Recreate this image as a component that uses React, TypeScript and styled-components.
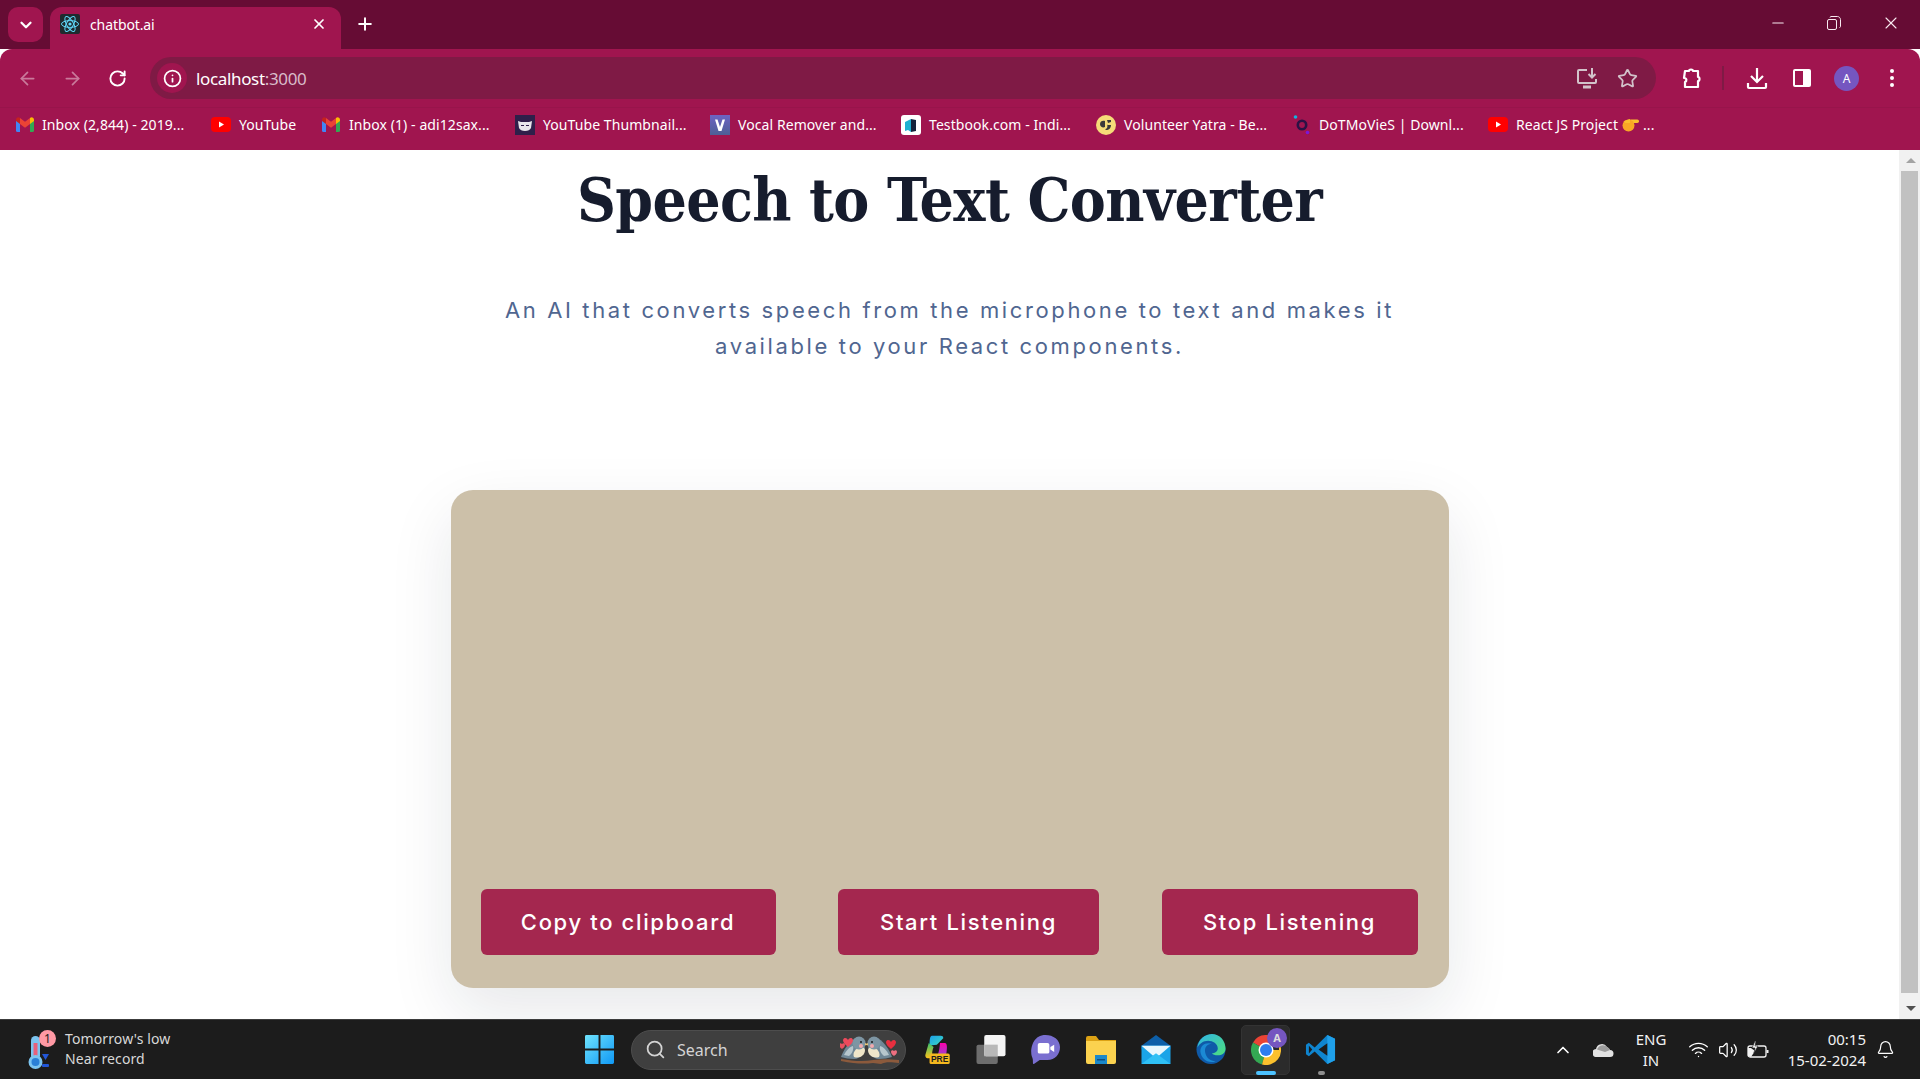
import { FC, ReactNode } from "react";
import styled, { createGlobalStyle } from "styled-components";
import {
  ArrowLeft,
  ArrowRight,
  ChevronDown,
  ChevronUp,
  Info,
  Minus,
  Plus,
  RotateCw,
  Search,
  Star,
  Volume2,
  Wifi,
  X,
  Bell,
} from "lucide-react";

const GlobalStyle = createGlobalStyle`
  html, body {
    margin: 0;
    padding: 0;
    height: 100%;
    overflow: hidden;
    background: #fff;
  }
  * {
    box-sizing: border-box;
  }
`;

const UI_FONT = `"Noto Sans", "Open Sans", sans-serif`;

const Screen = styled.div`
  width: 1920px;
  height: 1079px;
  display: flex;
  flex-direction: column;
  overflow: hidden;
  font-family: ${UI_FONT};
`;

/* browser chrome */

const TabStrip = styled.div`
  height: 49px;
  background: #660c34;
  display: flex;
  align-items: flex-end;
  padding-left: 8px;
  color: #fff;
`;

const TabSearch = styled.div`
  width: 35px;
  height: 35px;
  margin-bottom: 7px;
  border-radius: 10px;
  background: #a0154f;
  display: flex;
  align-items: center;
  justify-content: center;
`;

const Tab = styled.div`
  width: 291px;
  height: 42px;
  margin-left: 7px;
  padding: 0 14px 8px 10px;
  border-radius: 12px 12px 0 0;
  background: #a0154f;
  display: flex;
  align-items: center;
  gap: 10px;
`;

const TabTitle = styled.span`
  flex: 1;
  font-size: 14px;
  letter-spacing: -0.1px;
`;

const NewTab = styled.div`
  width: 30px;
  height: 30px;
  margin: 0 0 10px 9px;
  display: flex;
  align-items: center;
  justify-content: center;
`;

const WindowControls = styled.div`
  margin-left: auto;
  height: 49px;
  padding-bottom: 3px;
  display: flex;
  align-items: center;
`;

const WindowButton = styled.div<{ $w: number }>`
  width: ${(p) => p.$w}px;
  display: flex;
  justify-content: center;
  color: #f8eaf0;
`;

const Toolbar = styled.div`
  height: 58px;
  background: #a0154f;
  border-radius: 12px 12px 0 0;
  padding: 8px 4px 8px 5px;
  display: flex;
  align-items: center;
`;

const ToolButton = styled.div<{ $dim?: boolean }>`
  width: 45px;
  height: 42px;
  display: flex;
  align-items: center;
  justify-content: center;
  color: ${(p) => (p.$dim ? "#c97a9b" : "#fff")};
`;

const Omnibox = styled.div`
  width: 1506px;
  height: 42px;
  margin: 0 12px 0 10px;
  padding: 0 9px 0 7px;
  border-radius: 21px;
  background: #7f1a45;
  display: flex;
  align-items: center;
`;

const SiteInfo = styled.div`
  width: 30px;
  height: 30px;
  border-radius: 50%;
  background: #a0154f;
  color: #fff;
  display: flex;
  align-items: center;
  justify-content: center;
`;

const Url = styled.span`
  flex: 1;
  margin-left: 9px;
  font-size: 17px;
  letter-spacing: -0.35px;
  color: #fff;
`;

const UrlPort = styled.span`
  color: #d9bcc9;
`;

const OmniAction = styled.div`
  width: 40px;
  height: 30px;
  display: flex;
  align-items: center;
  justify-content: center;
  color: #d2c3ca;
`;

const ToolDivider = styled.div`
  width: 2px;
  height: 24px;
  margin: 0 10px 0 9px;
  background: #7f1a45;
`;

const Avatar = styled.div`
  width: 25px;
  height: 25px;
  border-radius: 50%;
  background: #7556c0;
  color: #fff;
  font-size: 12px;
  display: flex;
  align-items: center;
  justify-content: center;
`;

const BookmarkBar = styled.div`
  height: 43px;
  background: #a0154f;
  padding: 0 0 9px 16px;
  display: flex;
  align-items: center;
  border-top: 1px solid #98144b;
`;

const Bookmark = styled.div<{ $w: number; $gap: number }>`
  width: ${(p) => p.$w}px;
  flex: none;
  display: flex;
  align-items: center;
  gap: ${(p) => p.$gap}px;
  color: #fff;
  font-size: 14px;
  letter-spacing: 0.08px;
  white-space: nowrap;
`;

const BookmarkLabel = styled.span`
  display: inline-flex;
  align-items: center;
  gap: 4px;
`;

/* page */

const Viewport = styled.div`
  flex: 1;
  min-height: 0;
  display: flex;
  background: #fff;
`;

const Main = styled.main`
  flex: 1;
  min-width: 0;
  display: flex;
  flex-direction: column;
  align-items: center;
  overflow: hidden;
`;

const Heading = styled.h1`
  margin: 14px 0 0;
  font-family: "DejaVu Serif Condensed", "DejaVu Serif", "Liberation Serif", serif;
  font-size: 60px;
  line-height: 72px;
  font-weight: 700;
  letter-spacing: -0.6px;
  color: #161c2d;
`;

const Lead = styled.p`
  width: 900px;
  margin: 56px 0 0;
  font-family: "Inter", "Liberation Sans", sans-serif;
  font-size: 22px;
  font-weight: 400;
  line-height: 36px;
  letter-spacing: 2.62px;
  text-align: center;
  color: #506690;
`;

const Card = styled.section`
  width: 998px;
  height: 498px;
  margin-top: 126px;
  padding: 0 31px 33px 30px;
  border-radius: 22px;
  background: #ccc0a9;
  box-shadow: 0 24px 64px rgba(22, 28, 45, 0.1);
  display: flex;
  align-items: flex-end;
  justify-content: space-between;
`;

const ActionButton = styled.button<{ $w: number }>`
  width: ${(p) => p.$w}px;
  height: 66px;
  padding: 0;
  border: none;
  border-radius: 6px;
  background: #a4274f;
  color: #fff;
  font-family: "Inter", "Liberation Sans", sans-serif;
  font-size: 22px;
  font-weight: 500;
  letter-spacing: 1.65px;
`;

const Scrollbar = styled.div`
  width: 21px;
  padding-left: 2px;
  background: #f1f1f1;
  display: flex;
  flex-direction: column;
  align-items: stretch;
`;

const ScrollArrow = styled.div<{ $down?: boolean }>`
  height: 21px;
  display: flex;
  align-items: center;
  justify-content: center;
  &::before {
    content: "";
    border-left: 5px solid transparent;
    border-right: 5px solid transparent;
    ${(p) => (p.$down ? "border-top: 5px solid #505050;" : "border-bottom: 5px solid #a3a3a3;")}
  }
`;

const ScrollThumb = styled.div`
  height: 822px;
  margin-right: 2px;
  background: #c1c1c1;
`;

const ScrollGap = styled.div`
  flex: 1;
`;

/* taskbar */

const Taskbar = styled.footer`
  height: 60px;
  flex: none;
  border-top: 1px solid #3c3c3c;
  background: #1c1c1c;
  display: flex;
  align-items: center;
  color: #fff;
`;

const Weather = styled.div`
  width: 572px;
  padding-left: 28px;
  display: flex;
  align-items: center;
  gap: 14px;
`;

const WeatherIcon = styled.div`
  position: relative;
  width: 23px;
  height: 42px;
  display: flex;
  align-items: flex-end;
`;

const WeatherBadge = styled.span`
  position: absolute;
  top: 1px;
  left: 11px;
  width: 17px;
  height: 17px;
  border-radius: 50%;
  background: #ff99a4;
  color: #1c1c1c;
  font-size: 12px;
  line-height: 17px;
  text-align: center;
`;

const WeatherText = styled.div`
  margin-top: -2px;
  font-size: 14px;
  line-height: 20px;
  letter-spacing: 0.12px;
  color: #d8d8d8;
`;

const TaskIcon = styled.div<{ $active?: boolean }>`
  position: relative;
  width: 55px;
  height: 50px;
  flex: none;
  display: flex;
  align-items: center;
  justify-content: center;
  &::before {
    content: "";
    display: ${(p) => (p.$active ? "block" : "none")};
    position: absolute;
    inset: 0 3px;
    border-radius: 5px;
    background: #2b2b2b;
    border: 1px solid #333;
  }
  & > svg {
    position: relative;
  }
`;

const RunningMark = styled.span<{ $active?: boolean }>`
  position: absolute;
  bottom: 0;
  left: 50%;
  width: ${(p) => (p.$active ? 20 : 7)}px;
  height: 4px;
  margin-left: ${(p) => (p.$active ? -10 : -3)}px;
  border-radius: 2px;
  background: ${(p) => (p.$active ? "#4cc2ff" : "#8f8f8f")};
`;

const ChromeBadge = styled.span`
  position: absolute;
  top: 3px;
  right: 6px;
  width: 20px;
  height: 20px;
  border-radius: 50%;
  background: #7556c0;
  color: #ddd;
  font-size: 11px;
  font-weight: 700;
  line-height: 20px;
  text-align: center;
`;

const SearchPill = styled.div`
  width: 275px;
  height: 40px;
  margin: 0 2px 0 4px;
  padding: 0 5px 0 13px;
  border-radius: 20px;
  border: 1px solid #4d4d4d;
  background: #3f3f3f;
  display: flex;
  align-items: center;
  color: #d4d4d4;
`;

const SearchText = styled.span`
  flex: 1;
  margin-left: 11px;
  font-size: 16px;
`;

const Tray = styled.div`
  margin-left: auto;
  padding-right: 16px;
  display: flex;
  align-items: center;
`;

const TrayItem = styled.div<{ $w: number; $end?: boolean }>`
  width: ${(p) => p.$w}px;
  flex: none;
  display: flex;
  align-items: center;
  justify-content: ${(p) => (p.$end ? "flex-end" : "center")};
`;

const TrayText = styled.div<{ $right?: boolean }>`
  font-size: 15px;
  line-height: 21px;
  text-align: ${(p) => (p.$right ? "right" : "center")};
  color: #f2f2f2;
`;

/* small drawings */

const ReactMark: FC = () => (
  <svg width="20" height="20" viewBox="0 0 20 20">
    <rect width="20" height="20" rx="2" fill="#1f2a2e" />
    <g fill="none" stroke="#61dafb" strokeWidth="1">
      <ellipse cx="10" cy="10" rx="8.5" ry="3.4" />
      <ellipse cx="10" cy="10" rx="8.5" ry="3.4" transform="rotate(60 10 10)" />
      <ellipse cx="10" cy="10" rx="8.5" ry="3.4" transform="rotate(120 10 10)" />
    </g>
    <circle cx="10" cy="10" r="1.6" fill="#61dafb" />
  </svg>
);

const Gmail: FC = () => (
  <svg width="18" height="15" viewBox="0 0 18 15">
    <path d="M0 3v10.5A1.5 1.5 0 0 0 1.5 15H4V6z" fill="#4285f4" />
    <path d="M18 3v10.5a1.5 1.5 0 0 1-1.500 1.500H14V6z" fill="#34a853" />
    <path d="M14 1v6l-5 3.700L4 7V1l5 3.800z" fill="#ea4335" />
    <path d="M0 3c0-2.500 2.500-3.500 4-2v6L0 4z" fill="#c5221f" />
    <path d="M18 3c0-2.500-2.500-3.500-4-2v6l4-3z" fill="#fbbc04" />
  </svg>
);

const YouTube: FC = () => (
  <svg width="20" height="15" viewBox="0 0 20 15">
    <rect width="20" height="15" rx="4" fill="#f00" />
    <path d="M8 4.500v6l5-3z" fill="#fff" />
  </svg>
);

const Thumbnail: FC = () => (
  <svg width="20" height="20" viewBox="0 0 20 20">
    <rect width="20" height="20" fill="#2f1f4a" />
    <path d="M3 6l3 1h8l3-1-1 7c-1 2-3 3-6 3s-5-1-6-3z" fill="#e8e6ec" />
    <path d="M6 10h3v1H6zM11 10h3v1h-3z" fill="#2f1f4a" />
  </svg>
);

const VocalMark: FC = () => (
  <svg width="20" height="20" viewBox="0 0 20 20">
    <defs>
      <linearGradient id="vr" x1="0" y1="0" x2="0" y2="1">
        <stop offset="0" stopColor="#6d63c4" />
        <stop offset="1" stopColor="#4d5f96" />
      </linearGradient>
    </defs>
    <rect width="20" height="20" fill="url(#vr)" />
    <path d="M5 4.500h2.500L10 12l2.500-7.500H15L11.500 16h-3z" fill="#fff" />
  </svg>
);

const Testbook: FC = () => (
  <svg width="20" height="20" viewBox="0 0 20 20">
    <rect width="20" height="20" rx="3" fill="#fff" />
    <path d="M4 7l6-3v13l-3-2-3 1z" fill="#1fb0d1" />
    <path d="M10 4l5 1v11l-5 1z" fill="#15233b" />
  </svg>
);

const Volunteer: FC = () => (
  <svg width="20" height="20" viewBox="0 0 20 20">
    <circle cx="10" cy="10" r="10" fill="#f5dc78" />
    <path d="M4 9c0-3 3-4 5-3v6c-2 1-5 0-5-3zM11 5h4v2l-3 1zM11 10h4c0 3-2 5-5 5l-1-1c2 0 3-2 2-5z" fill="#3a3a3a" />
  </svg>
);

const DotMovies: FC = () => (
  <svg width="18" height="22" viewBox="0 0 18 22">
    <circle cx="2.500" cy="3" r="1.800" fill="#10b5e0" />
    <circle cx="9" cy="11" r="4.200" fill="none" stroke="#2b1245" strokeWidth="2.600" />
    <circle cx="14.500" cy="18.500" r="1.800" fill="#7a18d8" />
  </svg>
);

const PointingHand: FC = () => (
  <svg width="17" height="15" viewBox="0 0 17 15">
    <rect x="7" y="2.500" width="10" height="3.500" rx="1.700" fill="#fbc02d" />
    <circle cx="6.500" cy="8.500" r="6" fill="#f9a825" />
    <path d="M2 4l6-2v4H3z" fill="#fbc02d" />
  </svg>
);

const InstallIcon: FC = () => (
  <svg width="22" height="22" viewBox="0 0 22 22" fill="none" stroke="currentColor" strokeWidth="2">
    <path d="M11 3H3a1 1 0 0 0-1 1v11a1 1 0 0 0 1 1h16a1 1 0 0 0 1-1v-3" />
    <path d="M16 1v9M12.500 7l3.500 3.500L19.500 7" />
    <path d="M7 20h8" strokeWidth="3" />
  </svg>
);

const PuzzleIcon: FC = () => (
  <svg width="22" height="22" viewBox="0 0 22 22" fill="none" stroke="currentColor" strokeWidth="2.200" strokeLinejoin="round">
    <path d="M5 4h4c0-2 4-2 4 0h5v6c2 0 2 4 0 4v6H5v-5c2-1 2-4-1-4l1-7z" />
  </svg>
);

const DownloadIcon: FC = () => (
  <svg width="22" height="24" viewBox="0 0 22 24" fill="none" stroke="currentColor" strokeWidth="2.200">
    <path d="M11 2v13M5 10l6 6 6-6" />
    <path d="M2 17v4a1 1 0 0 0 1 1h16a1 1 0 0 0 1-1v-4" />
  </svg>
);

const SidePanelIcon: FC = () => (
  <svg width="20" height="20" viewBox="0 0 20 20">
    <rect x="1" y="1" width="18" height="18" rx="2" fill="#fff" />
    <rect x="3" y="3" width="8" height="14" fill="#a0154f" />
  </svg>
);

const RestoreIcon: FC = () => (
  <svg width="14" height="14" viewBox="0 0 14 14" fill="none" stroke="currentColor" strokeWidth="1">
    <rect x="0.500" y="3.500" width="9" height="10" rx="1.500" />
    <path d="M3 1.500C3 1 3.500.5 4 .5h6.500c1.500 0 3 1.500 3 3v7c0 .5-.5 1-1 1" />
  </svg>
);

const Thermometer: FC = () => (
  <svg width="23" height="36" viewBox="0 0 23 36">
    <rect x="3" y="1" width="9" height="24" rx="4.500" fill="#7cc4f0" />
    <rect x="5.500" y="8" width="4" height="14" fill="#e8607c" />
    <circle cx="7.500" cy="27" r="7" fill="#7cc4f0" />
    <circle cx="7.500" cy="27" r="4" fill="#2a7fd6" />
    <path d="M14 19h7l-3.500 6z" fill="#2257d8" />
    <rect x="14" y="29" width="7" height="3" rx="1" fill="#2257d8" />
  </svg>
);

const WindowsLogo: FC = () => (
  <svg width="29" height="29" viewBox="0 0 30 30">
    <defs>
      <linearGradient id="win" x1="0" y1="0" x2="1" y2="1">
        <stop offset="0" stopColor="#6fe3fd" />
        <stop offset="1" stopColor="#0f98f5" />
      </linearGradient>
    </defs>
    <path d="M0 1.500A1.500 1.500 0 0 1 1.500 0H14v14H0zM16 0h12.500A1.500 1.500 0 0 1 30 1.500V14H16zM0 16h14v14H1.500A1.500 1.500 0 0 1 0 28.500zM16 16h14v12.500a1.500 1.500 0 0 1-1.500 1.500H16z" fill="url(#win)" />
  </svg>
);

const Bird: FC<{ flip?: boolean }> = ({ flip }) => (
  <g transform={flip ? "translate(53 0) scale(-1 1)" : undefined}>
    <path d="M1 25c3-8 8-15 13-18 5-3 11 0 11 6 0 7-4 14-11 14-5 0-9-1-13-2z" fill="#6f8796" />
    <path d="M14 25c-2-4 2-9 6-10 3 0 5 1 5 3 0 5-5 9-11 7z" fill="#efe6c9" />
    <path d="M4 23c2-4 5-8 9-9 1 3-1 8-4 10z" fill="#b6c6cc" />
    <circle cx="19" cy="11" r="6.500" fill="#7d95a3" />
    <circle cx="21" cy="14" r="2" fill="#f3a9ad" />
    <circle cx="21" cy="10" r="1" fill="#1c1c1c" />
    <path d="M25 11l3 1.500-3 1z" fill="#e8c77a" />
  </g>
);

const Birds: FC = () => (
  <svg width="60" height="36" viewBox="0 0 60 36">
    <path d="M1 27c12 2 22 3 32 1 8-1 16-1 26 0v3c-9-1-14-1-18 1l-8-1c-8 1-18 1-32-2z" fill="#8c5a3c" />
    <Bird />
    <Bird flip />
    <path d="M3 8c1-3 4-2 5 0 1-2 4-3 5 0 0 3-3 5-5 7-2-2-5-4-5-7z" fill="#ec4a5c" />
    <path d="M-1 13c0-2 2-2 3-1 1-1 3-1 3 1s-2 3-3 4c-1-1-3-2-3-4z" fill="#e8505f" />
    <path d="M46 10c1-3 4-2 5 0 1-2 4-3 5 0 0 3-3 5-5 7-2-2-5-4-5-7z" fill="#e82f3f" />
    <path d="M51 20c0-2 2-2 3-1 1-1 3-1 3 1s-2 3-3 4c-1-1-3-2-3-4z" fill="#ef6f80" />
  </svg>
);

const Copilot: FC = () => (
  <svg width="28" height="29" viewBox="0 0 34 36">
    <defs>
      <linearGradient id="cpa" x1="0" y1="0" x2="1" y2="1">
        <stop offset="0" stopColor="#1d9fe8" />
        <stop offset="1" stopColor="#3adbc0" />
      </linearGradient>
      <linearGradient id="cpb" x1="0" y1="0" x2="0" y2="1">
        <stop offset="0" stopColor="#f0a" />
        <stop offset="1" stopColor="#7d4fd8" />
      </linearGradient>
      <linearGradient id="cpc" x1="0" y1="0" x2="0" y2="1">
        <stop offset="0" stopColor="#36c26f" />
        <stop offset="1" stopColor="#ffc21a" />
      </linearGradient>
    </defs>
    <path d="M12 1h11c2 0 3 1 3 3l-8 8-9 1c0-5 0-12 3-12z" fill="url(#cpa)" />
    <path d="M22 10h6c3 0 3 6 2 12-1 5-3 7-6 7h-9c5-3 6-8 7-19z" fill="url(#cpb)" />
    <path d="M8 10L4 24c-1 3 1 5 3 5h9c-4-3-5-6-2-14z" fill="url(#cpc)" />
    <rect x="9" y="23" width="25" height="13" rx="2" fill="#f5b81f" />
    <text x="21.500" y="33.500" fontSize="10.500" fontWeight="700" textAnchor="middle" fill="#1c1c1c" fontFamily="Liberation Sans, sans-serif">PRE</text>
  </svg>
);

const TaskView: FC = () => (
  <svg width="30" height="29" viewBox="0 0 30 30">
    <rect x="0" y="10" width="22" height="20" rx="2" fill="#6d6d6d" />
    <rect x="8" y="0" width="22" height="22" rx="2" fill="#f4f4f4" />
    <rect x="8" y="10" width="14" height="12" fill="#b8b8b8" />
  </svg>
);

const MeetIcon: FC = () => (
  <svg width="29" height="29" viewBox="0 0 30 36" preserveAspectRatio="none">
    <path d="M15 0C23 0 30 6 30 15s-5 16-13 16H9l-6 5c-1 0-1-1-1-2 0-3 0-4-1-7-2-5-1-27 14-27z" fill="#7a6fd0" />
    <rect x="7" y="10" width="12" height="13" rx="2" fill="#fff" />
    <path d="M20 15l4-3v9l-4-3z" fill="#fff" />
  </svg>
);

const FolderIcon: FC = () => (
  <svg width="30" height="28" viewBox="0 0 30 28">
    <path d="M0 2a2 2 0 0 1 2-2h8l3 4h17v6H0z" fill="#dca215" />
    <path d="M0 5h30v21a2 2 0 0 1-2 2H2a2 2 0 0 1-2-2z" fill="#fbd24f" />
    <rect x="9" y="19" width="12" height="9" fill="#1b88c9" />
    <rect x="11" y="23" width="8" height="1.500" fill="#0d4f82" />
  </svg>
);

const MailIcon: FC = () => (
  <svg width="30" height="29" viewBox="0 0 30 30">
    <path d="M0 11L15 0l15 11v4H0z" fill="#0d5fa8" />
    <rect x="0" y="11" width="30" height="19" fill="#1aa4e8" />
    <path d="M0 11h30L15 24z" fill="#e8f7fd" />
    <path d="M0 30L15 19l15 11z" fill="#2fc0f5" />
  </svg>
);

const EdgeIcon: FC = () => (
  <svg width="30" height="31" viewBox="0 0 30 32">
    <defs>
      <linearGradient id="edge" x1="0" y1="0" x2="1" y2="1">
        <stop offset="0" stopColor="#2fb4e9" />
        <stop offset="1" stopColor="#4ee07b" />
      </linearGradient>
    </defs>
    <circle cx="15" cy="16" r="15" fill="#0f5aa8" />
    <path d="M1 14C2 5 9 0 16 0c8 0 14 7 14 15 0 5-4 7-8 7-3 0-5-1-6-2 3 0 6-2 6-5 0-5-5-8-10-8C7 7 3 10 1 14z" fill="url(#edge)" />
    <path d="M16 10c-5 0-8 4-7 9s5 9 11 9c-8 3-15-2-16-10 0-6 5-10 12-8z" fill="#1b8ad4" />
  </svg>
);

const ChromeIcon: FC = () => (
  <svg width="30" height="30" viewBox="0 0 30 30">
    <path d="M15 15L2 7.500A15 15 0 0 1 28 7.500z" fill="#ea4335" />
    <path d="M15 15L2 7.500A15 15 0 0 0 11 29.500z" fill="#34a853" />
    <path d="M15 15h13V7.500A15 15 0 0 1 11 29.500z" fill="#fbc02d" />
    <circle cx="15" cy="15" r="7.500" fill="#fff" />
    <circle cx="15" cy="15" r="6" fill="#2f7df0" />
  </svg>
);

const VsCode: FC = () => (
  <svg width="31" height="31" viewBox="0 0 32 32">
    <path d="M23 1l8 4v22l-8 4-13-13-6 5-3-2v-10l3-2 6 5z" fill="#0f85cf" />
    <path d="M23 1l8 4v22l-8 4z" fill="#1fa0ea" />
    <path d="M23 9.500L14 16l9 6.500z" fill="#1c1c1c" />
    <path d="M4 12l3.500 4L4 20z" fill="#1c1c1c" />
  </svg>
);

const OneDrive: FC = () => (
  <svg width="21" height="14" viewBox="0 0 21 14">
    <path d="M4 14a4 4 0 0 1-1-8 6 6 0 0 1 11-2 5 5 0 0 1 3 3 3.500 3.500 0 0 1 0 7z" fill="#e2e2e2" />
    <path d="M4 6.500a6 6 0 0 1 10-2.500 5 5 0 0 1 3 3l-5 2z" fill="#9c9c9c" />
  </svg>
);

const BatteryIcon: FC = () => (
  <svg width="22" height="18" viewBox="0 0 22 18" fill="none" stroke="#f2f2f2" strokeWidth="1.300">
    <rect x="1" y="5" width="18" height="11" rx="2" />
    <path d="M20.500 9v3" strokeWidth="2" />
    <path d="M1 15V7h3l4 3-4 6z" fill="#f2f2f2" stroke="none" />
    <path d="M8 0L5 7h3L7 12l4-7H8l1-5z" fill="#f2f2f2" stroke="#1c1c1c" strokeWidth="0.600" />
  </svg>
);

const bookmarks: { icon: ReactNode; label: ReactNode; width: number; gap: number }[] = [
  { icon: <Gmail />, label: "Inbox (2,844) - 2019...", width: 195, gap: 8 },
  { icon: <YouTube />, label: "YouTube", width: 111, gap: 8 },
  { icon: <Gmail />, label: "Inbox (1) - adi12sax...", width: 193, gap: 9 },
  { icon: <Thumbnail />, label: "YouTube Thumbnail...", width: 195, gap: 8 },
  { icon: <VocalMark />, label: "Vocal Remover and...", width: 191, gap: 8 },
  { icon: <Testbook />, label: "Testbook.com - Indi...", width: 195, gap: 8 },
  { icon: <Volunteer />, label: "Volunteer Yatra - Be...", width: 197, gap: 8 },
  { icon: <DotMovies />, label: "DoTMoVieS | Downl...", width: 195, gap: 8 },
  {
    icon: <YouTube />,
    label: (
      <>
        React JS Project <PointingHand /> ...
      </>
    ),
    width: 170,
    gap: 8,
  },
];

const App: FC = () => (
  <Screen>
    <GlobalStyle />
    <TabStrip>
      <TabSearch>
        <ChevronDown size={18} strokeWidth={3} />
      </TabSearch>
      <Tab>
        <ReactMark />
        <TabTitle>chatbot.ai</TabTitle>
        <X size={16} strokeWidth={2.6} />
      </Tab>
      <NewTab>
        <Plus size={20} strokeWidth={2.4} />
      </NewTab>
      <WindowControls>
        <WindowButton $w={56}>
          <Minus size={18} strokeWidth={1.4} />
        </WindowButton>
        <WindowButton $w={56}>
          <RestoreIcon />
        </WindowButton>
        <WindowButton $w={58}>
          <X size={20} strokeWidth={1.3} />
        </WindowButton>
      </WindowControls>
    </TabStrip>

    <Toolbar>
      <ToolButton $dim>
        <ArrowLeft size={21} strokeWidth={2} />
      </ToolButton>
      <ToolButton $dim>
        <ArrowRight size={21} strokeWidth={2} />
      </ToolButton>
      <ToolButton>
        <RotateCw size={19} strokeWidth={2.4} />
      </ToolButton>
      <Omnibox>
        <SiteInfo>
          <Info size={19} strokeWidth={2.2} />
        </SiteInfo>
        <Url>
          localhost<UrlPort>:3000</UrlPort>
        </Url>
        <OmniAction>
          <InstallIcon />
        </OmniAction>
        <OmniAction>
          <Star size={21} strokeWidth={2} />
        </OmniAction>
      </Omnibox>
      <ToolButton>
        <PuzzleIcon />
      </ToolButton>
      <ToolDivider />
      <ToolButton>
        <DownloadIcon />
      </ToolButton>
      <ToolButton>
        <SidePanelIcon />
      </ToolButton>
      <ToolButton>
        <Avatar>A</Avatar>
      </ToolButton>
      <ToolButton>
        <svg width="6" height="20" viewBox="0 0 6 20" fill="#fff">
          <circle cx="3" cy="3" r="2" />
          <circle cx="3" cy="10" r="2" />
          <circle cx="3" cy="17" r="2" />
        </svg>
      </ToolButton>
    </Toolbar>

    <BookmarkBar>
      {bookmarks.map((b, i) => (
        <Bookmark key={i} $w={b.width} $gap={b.gap}>
          {b.icon}
          <BookmarkLabel>{b.label}</BookmarkLabel>
        </Bookmark>
      ))}
    </BookmarkBar>

    <Viewport>
      <Main>
        <Heading>Speech to Text Converter</Heading>
        <Lead>
          An AI that converts speech from the microphone to text and makes it available to your React components.
        </Lead>
        <Card>
          <ActionButton $w={295}>Copy to clipboard</ActionButton>
          <ActionButton $w={261}>Start Listening</ActionButton>
          <ActionButton $w={256}>Stop Listening</ActionButton>
        </Card>
      </Main>
      <Scrollbar>
        <ScrollArrow />
        <ScrollThumb />
        <ScrollGap />
        <ScrollArrow $down />
      </Scrollbar>
    </Viewport>

    <Taskbar>
      <Weather>
        <WeatherIcon>
          <Thermometer />
          <WeatherBadge>1</WeatherBadge>
        </WeatherIcon>
        <WeatherText>
          Tomorrow's low
          <br />
          Near record
        </WeatherText>
      </Weather>
      <TaskIcon>
        <WindowsLogo />
      </TaskIcon>
      <SearchPill>
        <Search size={21} strokeWidth={2} />
        <SearchText>Search</SearchText>
        <Birds />
      </SearchPill>
      <TaskIcon>
        <Copilot />
      </TaskIcon>
      <TaskIcon>
        <TaskView />
      </TaskIcon>
      <TaskIcon>
        <MeetIcon />
      </TaskIcon>
      <TaskIcon>
        <FolderIcon />
      </TaskIcon>
      <TaskIcon>
        <MailIcon />
      </TaskIcon>
      <TaskIcon>
        <EdgeIcon />
      </TaskIcon>
      <TaskIcon $active>
        <ChromeIcon />
        <ChromeBadge>A</ChromeBadge>
        <RunningMark $active />
      </TaskIcon>
      <TaskIcon>
        <VsCode />
        <RunningMark />
      </TaskIcon>
      <Tray>
        <TrayItem $w={40}>
          <ChevronUp size={20} strokeWidth={2} />
        </TrayItem>
        <TrayItem $w={40}>
          <OneDrive />
        </TrayItem>
        <TrayItem $w={56}>
          <TrayText>
            ENG
            <br />
            IN
          </TrayText>
        </TrayItem>
        <TrayItem $w={38}>
          <Wifi size={21} strokeWidth={1.6} />
        </TrayItem>
        <TrayItem $w={22}>
          <Volume2 size={20} strokeWidth={1.5} />
        </TrayItem>
        <TrayItem $w={38}>
          <BatteryIcon />
        </TrayItem>
        <TrayItem $w={89} $end>
          <TrayText $right>
            00:15
            <br />
            15-02-2024
          </TrayText>
        </TrayItem>
        <TrayItem $w={38}>
          <Bell size={19} strokeWidth={1.5} />
        </TrayItem>
      </Tray>
    </Taskbar>
  </Screen>
);

export default App;
